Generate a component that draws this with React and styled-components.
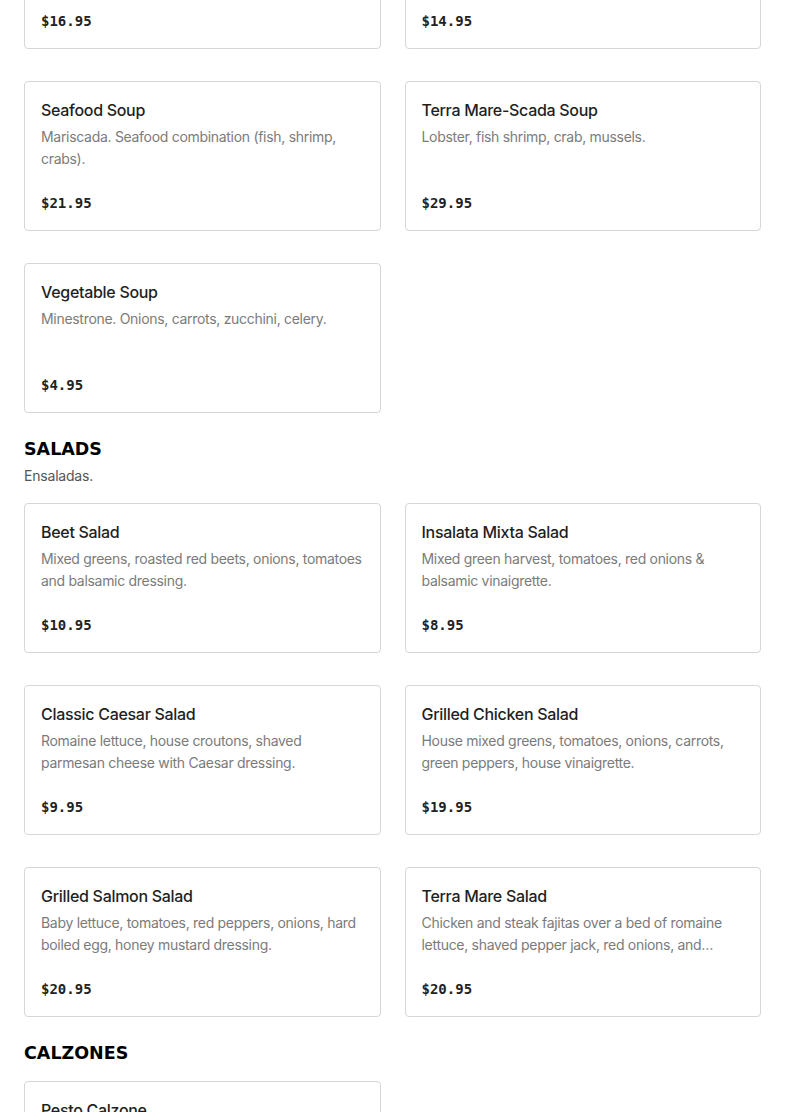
import React from 'react';
import styled, { createGlobalStyle } from 'styled-components';

const sections = [
  {
    id: 'soups',
    title: 'SOUPS',
    subtitle: 'Sopas.',
    items: [
      { name: 'Chicken Soup', desc: 'Chicken, vegetables and rice.', price: '$16.95' },
      { name: 'Shrimp Soup', desc: 'Shrimp, potatoes, carrots, cilantro.', price: '$14.95' },
      { name: 'Seafood Soup', desc: 'Mariscada. Seafood combination (fish, shrimp, crabs).', price: '$21.95' },
      { name: 'Terra Mare-Scada Soup', desc: 'Lobster, fish shrimp, crab, mussels.', price: '$29.95' },
      { name: 'Vegetable Soup', desc: 'Minestrone. Onions, carrots, zucchini, celery.', price: '$4.95' },
    ],
  },
  {
    id: 'salads',
    title: 'SALADS',
    subtitle: 'Ensaladas.',
    items: [
      { name: 'Beet Salad', desc: 'Mixed greens, roasted red beets, onions, tomatoes and balsamic dressing.', price: '$10.95' },
      { name: 'Insalata Mixta Salad', desc: 'Mixed green harvest, tomatoes, red onions & balsamic vinaigrette.', price: '$8.95' },
      { name: 'Classic Caesar Salad', desc: 'Romaine lettuce, house croutons, shaved parmesan cheese with Caesar dressing.', price: '$9.95' },
      { name: 'Grilled Chicken Salad', desc: 'House mixed greens, tomatoes, onions, carrots, green peppers, house vinaigrette.', price: '$19.95' },
      { name: 'Grilled Salmon Salad', desc: 'Baby lettuce, tomatoes, red peppers, onions, hard boiled egg, honey mustard dressing.', price: '$20.95' },
      { name: 'Terra Mare Salad', desc: 'Chicken and steak fajitas over a bed of romaine lettuce, shaved pepper jack, red onions, and avocado with chipotle ranch dressing.', price: '$20.95' },
    ],
  },
  {
    id: 'calzones',
    title: 'CALZONES',
    items: [
      { name: 'Pesto Calzone', desc: 'Pesto, mozzarella, chicken, spinach and tomatoes.', price: '$15.95' },
    ],
  },
];

export default function App() {
  return (
    <>
      <GlobalSC />
      <MenuSC>
        {sections.map((section) => (
          <SectionSC key={section.id}>
            <SectionTitleSC>{section.title}</SectionTitleSC>
            {section.subtitle && <SectionSubSC>{section.subtitle}</SectionSubSC>}
            <GridSC>
              {section.items.map((item) => (
                <CardSC key={item.name}>
                  <ItemNameSC>{item.name}</ItemNameSC>
                  <ItemDescSC>{item.desc}</ItemDescSC>
                  <PriceSC>{item.price}</PriceSC>
                </CardSC>
              ))}
            </GridSC>
          </SectionSC>
        ))}
      </MenuSC>
    </>
  );
}

const GlobalSC = createGlobalStyle`
  html, body {
    margin: 0;
    padding: 0;
    background: #fff;
    overflow: hidden;
  }
  body {
    font-family: Inter, "Noto Sans", sans-serif;
    color: #222;
  }
`;

// page is shown scrolled, the first row of soups is cut off at the top
const MenuSC = styled('div')`
  padding: 0 24px;
  margin-top: -167px;
`;

const SectionSC = styled('section')`
  margin-bottom: 24px;
`;

const SectionTitleSC = styled('h2')`
  margin: 0;
  font-family: "DejaVu Sans", sans-serif;
  font-weight: 900;
  font-size: 17.5px;
  line-height: 24px;
  letter-spacing: 0;
  color: #000;
`;

const SectionSubSC = styled('div')`
  margin-top: 4px;
  font-size: 14px;
  line-height: 22px;
  letter-spacing: -0.2px;
  color: #555;
`;

const GridSC = styled('div')`
  margin-top: 16px;
  display: grid;
  grid-template-columns: 1fr 1fr;
  column-gap: 24px;
  row-gap: 32px;
`;

const CardSC = styled('div')`
  border: 1px solid #d6d6d6;
  border-radius: 4px;
  padding: 16px;
  display: flex;
  flex-direction: column;
  min-width: 0;
`;

const ItemNameSC = styled('div')`
  font-size: 16px;
  font-weight: 500;
  line-height: 24px;
  letter-spacing: -0.3px;
  color: #1f1f1f;
`;

const ItemDescSC = styled('div')`
  margin-top: 4px;
  font-size: 14px;
  line-height: 22px;
  letter-spacing: -0.3px;
  height: 44px;
  color: #7b7b7b;
  display: -webkit-box;
  -webkit-line-clamp: 2;
  -webkit-box-orient: vertical;
  overflow: hidden;
`;

const PriceSC = styled('div')`
  margin-top: 22px;
  font-family: "DejaVu Sans Mono", monospace;
  font-weight: 700;
  font-size: 14px;
  line-height: 22px;
  color: #222;
`;
